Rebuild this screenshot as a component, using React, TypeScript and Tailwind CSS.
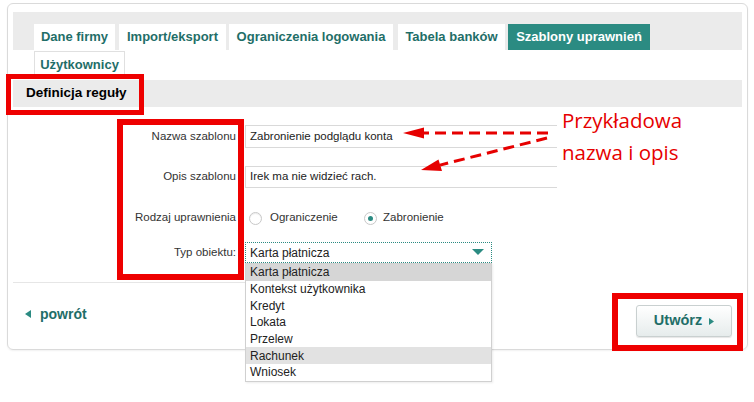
import React from "react";

const tabs = [
  { label: "Dane firmy", cls: "w-[81px] ml-0 bg-white text-[#1f6e68]" },
  { label: "Import/eksport", cls: "w-[107px] ml-[4px] bg-white text-[#1f6e68]" },
  { label: "Ograniczenia logowania", cls: "w-[164px] ml-[3px] bg-white text-[#1f6e68]" },
  { label: "Tabela banków", cls: "w-[107px] ml-[5px] bg-white text-[#1f6e68]" },
  { label: "Szablony uprawnień", cls: "w-[142px] ml-[3px] bg-[#2b8b82] text-white" },
];

const options = [
  { label: "Karta płatnicza", cls: "bg-[#d6d6d6]" },
  { label: "Kontekst użytkownika", cls: "bg-white" },
  { label: "Kredyt", cls: "bg-white" },
  { label: "Lokata", cls: "bg-white" },
  { label: "Przelew", cls: "bg-white" },
  { label: "Rachunek", cls: "bg-[#e2e2e2]" },
  { label: "Wniosek", cls: "bg-white" },
];

export default function App() {
  return (
    <div className="relative w-[754px] h-[402px] bg-white overflow-hidden pt-[3px] pl-[7px] font-['Liberation_Sans',Arial,sans-serif] text-[#222]">
      {/* Card */}
      <div className="w-[741px] h-[347px] border border-[#dadada] rounded-[6px] shadow-[0_1px_2px_rgba(0,0,0,0.06)] px-[5px] pt-[8px]">
        {/* Tab bar */}
        <div className="h-[38px] bg-[#ebebeb] flex items-end pl-[21px]">
          {tabs.map((t) => (
            <div
              key={t.label}
              className={`h-[26px] flex items-center justify-center text-[13px] font-bold ${t.cls}`}
            >
              {t.label}
            </div>
          ))}
        </div>
        {/* Second tab row */}
        <div className="mt-[1px] ml-[21px] w-[91px] h-[26px] border border-b-0 border-[#e0e0e0] flex items-center justify-center text-[13px] font-bold text-[#1f6e68]">
          Użytkownicy
        </div>
        {/* Section header */}
        <div className="mt-[3px] h-[27px] bg-[#ebebeb] flex items-center pl-[13px] text-[13.5px] font-bold text-black">
          Definicja reguły
        </div>

        {/* Form */}
        <div className="grid grid-cols-[224px_1fr] gap-x-[8px] text-[11.5px] text-[#333]">
          <div className="mt-[18px] h-[23px] flex items-center justify-end pr-[1px]">Nazwa szablonu</div>
          <div className="mt-[18px] h-[23px] w-[312px] border border-r-0 border-[#d9d9d9] flex items-center pl-[4px] text-[#222]">
            Zabronienie podglądu konta
          </div>

          <div className="mt-[18px] h-[22px] flex items-center justify-end pr-[1px]">Opis szablonu</div>
          <div className="mt-[18px] h-[22px] w-[312px] border border-r-0 border-[#d9d9d9] flex items-center pl-[4px] text-[#222]">
            Irek ma nie widzieć rach.
          </div>

          <div className="mt-[20px] h-[20px] flex items-center justify-end pr-[1px]">Rodzaj uprawnienia</div>
          <div className="mt-[20px] h-[20px] flex items-center">
            <div className="w-[119px] flex items-center pl-[4px]">
              <span className="w-[13px] h-[13px] rounded-full border border-[#c8c8c8] bg-white shadow-[inset_0_1px_1px_rgba(0,0,0,0.08)]" />
              <span className="ml-[8px]">Ograniczenie</span>
            </div>
            <div className="flex items-center">
              <span className="w-[13px] h-[13px] rounded-full border border-[#c8c8c8] bg-white flex items-center justify-center">
                <span className="w-[5px] h-[5px] rounded-full bg-[#2b8b82]" />
              </span>
              <span className="ml-[6px]">Zabronienie</span>
            </div>
          </div>

          <div className="mt-[14px] h-[21px] flex items-center justify-end pr-[1px]">Typ obiektu:</div>
          <div className="mt-[14px] h-[21px] w-[247px] border border-dotted border-[#2b8b82] flex items-center justify-between pl-[4px] pr-[7px] text-[12px] text-[#222]">
            <span>Karta płatnicza</span>
            <svg width="12" height="7" viewBox="0 0 12 7">
              <polygon points="0,0 12,0 6,6" fill="#2b8b82" />
            </svg>
          </div>
        </div>

        {/* Separator */}
        <div className="mt-[19px] h-px w-[240px] bg-[#e6e6e6]" />

        {/* Bottom row */}
        <div className="mt-[22px] flex items-start justify-between pl-[12px] pr-[10px]">
          <div className="mt-[1px] h-[16px] flex items-center text-[14px] font-bold text-[#1f6e68]">
            <svg width="6" height="8" viewBox="0 0 6 8" className="mr-[9px]">
              <polygon points="6,0 6,8 0,4" fill="#2b8b82" />
            </svg>
            powrót
          </div>
          <div className="w-[96px] h-[32px] rounded-[3px] border border-[#c9d0d0] bg-gradient-to-b from-white to-[#e6ecec] shadow-[0_1px_1px_rgba(0,0,0,0.1)] flex items-center justify-center text-[14.5px] font-bold text-[#1f6e68]">
            Utwórz
            <svg width="5" height="7" viewBox="0 0 5 7" className="ml-[7px]">
              <polygon points="0,0 5,3.5 0,7" fill="#2b8b82" />
            </svg>
          </div>
        </div>
      </div>

      {/* Dropdown list (overlay) */}
      <div className="absolute left-[245px] top-[263px] w-[247px] border border-[#d0d0d0] bg-white text-[12px] text-[#222] shadow-[1px_1px_2px_rgba(0,0,0,0.08)]">
        {options.map((o) => (
          <div key={o.label} className={`h-[16.7px] flex items-center pl-[4px] ${o.cls}`}>
            {o.label}
          </div>
        ))}
      </div>

      {/* Red highlight boxes */}
      <div className="absolute left-[6px] top-[74px] w-[138px] h-[41px] border-[5px] border-[#ee0000]" />
      <div className="absolute left-[117px] top-[119px] w-[127px] h-[161px] border-[6px] border-[#ee0000]" />
      <div className="absolute left-[612px] top-[293px] w-[131px] h-[58px] border-[6px] border-[#ee0000]" />

      {/* Annotation */}
      <div className="absolute left-[562px] top-[104px] font-['Open_Sans',sans-serif] text-[20.5px] leading-[32px] text-[#e60000]">
        <div>Przykładowa</div>
        <div>nazwa i opis</div>
      </div>
      <svg className="absolute left-0 top-0 pointer-events-none" width="754" height="402" viewBox="0 0 754 402">
        <line x1="548" y1="133" x2="423" y2="133" stroke="#e60000" strokeWidth="3" strokeDasharray="11 6" />
        <polygon points="403,133 424,127.5 424,138.5" fill="#e60000" />
        <line x1="547" y1="138" x2="440" y2="165.1" stroke="#e60000" strokeWidth="3" strokeDasharray="11 6" />
        <polygon points="421,170 442,171 438.5,159.5" fill="#e60000" />
      </svg>
    </div>
  );
}
